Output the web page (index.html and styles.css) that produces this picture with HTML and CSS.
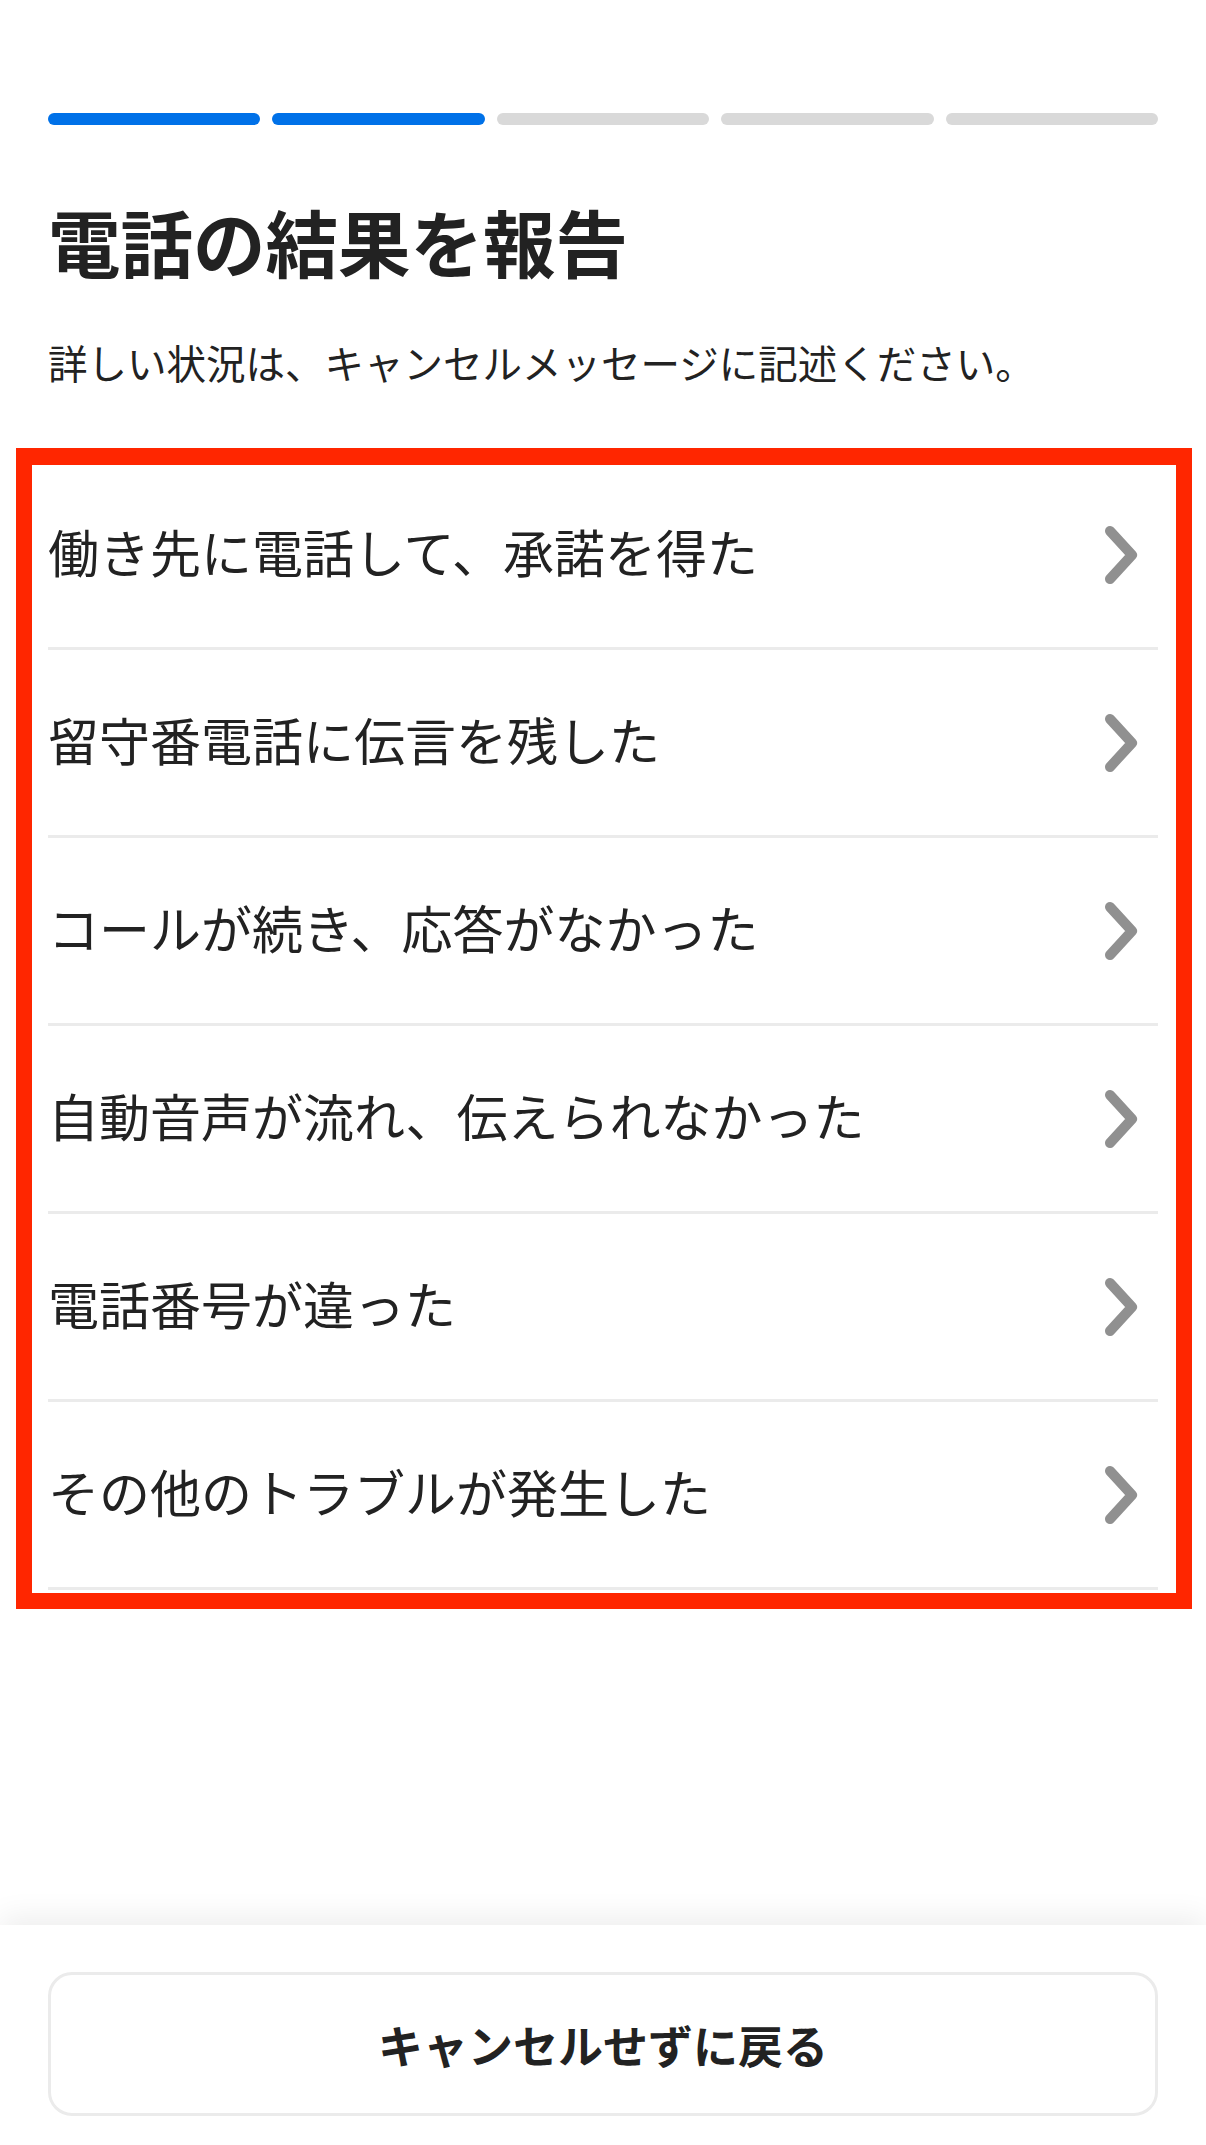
FILE: index.html
```html
<!DOCTYPE html>
<html lang="ja">
<head>
<meta charset="utf-8">
<title>電話の結果を報告</title>
<link rel="stylesheet" href="styles.css">
</head>
<body>
<div class="screen">
  <main class="content">
    <div class="progress">
      <span class="step active"></span>
      <span class="step active"></span>
      <span class="step"></span>
      <span class="step"></span>
      <span class="step"></span>
    </div>
    <h1 class="title">電話の結果を報告</h1>
    <p class="lead">詳しい状況は、キャンセルメッセージに記述ください。</p>
    <div class="list-wrap">
      <ul class="options">
        <li class="option"><span class="label">働き先に電話して、承諾を得た</span><svg class="chev" viewBox="0 0 36 62" width="36" height="62"><path d="M7 7 L29 31 L7 55"/></svg></li>
        <li class="option"><span class="label">留守番電話に伝言を残した</span><svg class="chev" viewBox="0 0 36 62" width="36" height="62"><path d="M7 7 L29 31 L7 55"/></svg></li>
        <li class="option"><span class="label">コールが続き、応答がなかった</span><svg class="chev" viewBox="0 0 36 62" width="36" height="62"><path d="M7 7 L29 31 L7 55"/></svg></li>
        <li class="option"><span class="label">自動音声が流れ、伝えられなかった</span><svg class="chev" viewBox="0 0 36 62" width="36" height="62"><path d="M7 7 L29 31 L7 55"/></svg></li>
        <li class="option"><span class="label">電話番号が違った</span><svg class="chev" viewBox="0 0 36 62" width="36" height="62"><path d="M7 7 L29 31 L7 55"/></svg></li>
        <li class="option"><span class="label">その他のトラブルが発生した</span><svg class="chev" viewBox="0 0 36 62" width="36" height="62"><path d="M7 7 L29 31 L7 55"/></svg></li>
      </ul>
      <div class="highlight"></div>
    </div>
  </main>
  <footer class="footer">
    <button class="back-btn" type="button">キャンセルせずに戻る</button>
  </footer>
</div>
</body>
</html>
```

FILE: styles.css
```css
html, body {
  margin: 0;
  padding: 0;
  background: #ffffff;
}

body {
  font-family: "Noto Sans CJK JP", "Noto Sans", sans-serif;
  color: #222222;
}

.screen {
  display: flex;
  flex-direction: column;
  height: 100vh;
  overflow: hidden;
}

.content {
  flex: 1;
  padding: 113px 48px 0;
}

.progress {
  display: flex;
  gap: 12px;
}

.step {
  flex: 1;
  height: 12px;
  border-radius: 6px;
  background: #d9d9d9;
}

.step.active {
  background: #0071e8;
}

.title {
  margin: 73px 0 0;
  font-size: 72.5px;
  line-height: 86px;
  font-weight: 700;
  color: #222222;
}

.lead {
  margin: 49px 0 0;
  font-size: 39.5px;
  line-height: 58px;
  color: #222222;
}

.list-wrap {
  position: relative;
  margin-top: 71px;
}

.options {
  list-style: none;
  margin: 0;
  padding: 0;
}

.option {
  display: flex;
  align-items: center;
  justify-content: space-between;
  height: 185px;
  border-bottom: 3px solid #ebebeb;
}

.label {
  padding-bottom: 6px;
  font-size: 51px;
  line-height: 1.2;
  color: #222222;
}

.chev {
  margin-right: 19px;
  flex: none;
}

.chev path {
  fill: none;
  stroke: #909090;
  stroke-width: 10;
  stroke-linecap: round;
  stroke-linejoin: round;
}

.highlight {
  position: absolute;
  top: -14px;
  left: -32px;
  right: -34px;
  bottom: -19px;
  border: 16px solid #ff2600;
  border-top-width: 17px;
  pointer-events: none;
}

.footer {
  flex: none;
  height: 220px;
  box-sizing: border-box;
  padding: 47px 48px 0;
  background: #ffffff;
  box-shadow: 0 -8px 28px rgba(0, 0, 0, 0.07);
}

.back-btn {
  display: block;
  width: 100%;
  height: 144px;
  box-sizing: border-box;
  border: 3px solid #ebebeb;
  border-radius: 24px;
  background: #ffffff;
  font-family: "Noto Sans CJK JP", "Noto Sans", sans-serif;
  font-size: 45px;
  font-weight: 700;
  color: #222222;
  cursor: pointer;
}
```
